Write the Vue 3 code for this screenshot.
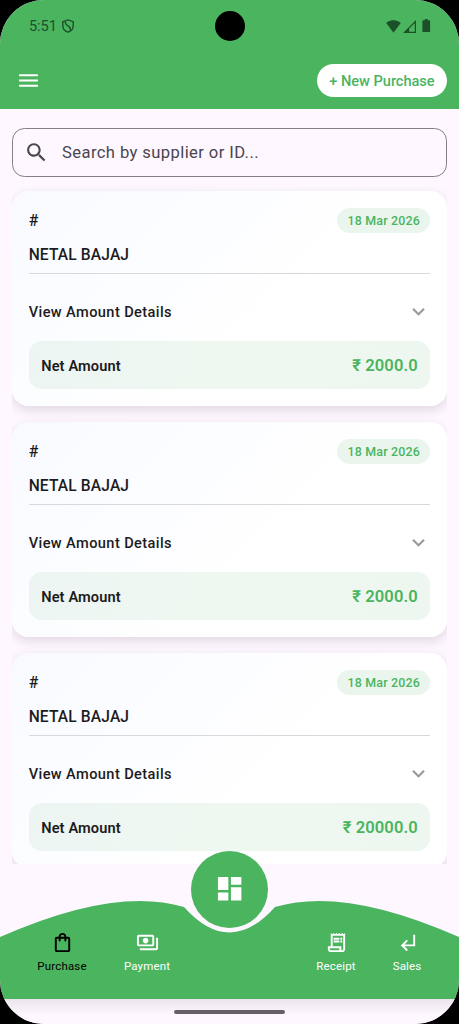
<script setup>
const purchases = [
  { id: 1, supplier: 'NETAL BAJAJ', date: '18 Mar 2026', net: '₹ 2000.0' },
  { id: 2, supplier: 'NETAL BAJAJ', date: '18 Mar 2026', net: '₹ 2000.0' },
  { id: 3, supplier: 'NETAL BAJAJ', date: '18 Mar 2026', net: '₹ 20000.0' },
]
const tabs = [
  { label: 'Purchase', slot: 'purchase', active: true, icon: 'M18 6h-2c0-2.21-1.79-4-4-4S8 3.79 8 6H6c-1.1 0-2 .9-2 2v12c0 1.1.9 2 2 2h12c1.1 0 2-.9 2-2V8c0-1.1-.9-2-2-2zm-6-2c1.1 0 2 .9 2 2h-4c0-1.1.9-2 2-2zm6 16H6V8h2v2c0 .55.45 1 1 1s1-.45 1-1V8h4v2c0 .55.45 1 1 1s1-.45 1-1V8h2v12z' },
  { label: 'Payment', slot: 'payment', icon: 'M19 14V6c0-1.1-.9-2-2-2H3c-1.1 0-2 .9-2 2v8c0 1.1.9 2 2 2h14c1.1 0 2-.9 2-2zm-2 0H3V6h14v8zm-7-7c-1.66 0-3 1.34-3 3s1.34 3 3 3 3-1.34 3-3-1.34-3-3-3zm13 0v11c0 1.1-.9 2-2 2H4v-2h17V7h2z' },
  { label: 'Receipt', slot: 'receipt', icon: 'M19.5 3.5L18 2l-1.5 1.5L15 2l-1.5 1.5L12 2l-1.5 1.5L9 2 7.5 3.5 6 2v14H3v3c0 1.66 1.34 3 3 3h12c1.66 0 3-1.34 3-3V2l-1.5 1.5zM15 20H6c-.55 0-1-.45-1-1v-1h10v2zm4-1c0 .55-.45 1-1 1s-1-.45-1-1v-3H8V5h11v14zM9 7h6v2H9zm7 0h2v2h-2zM9 10h6v2H9zm7 0h2v2h-2z' },
  { label: 'Sales', slot: 'sales', icon: 'M11 9l1.42 1.42L8.83 14H18V4h2v12H8.83l3.59 3.58L11 21l-6-6 6-6z' },
]
</script>

<template>
  <div class="device">
    <div class="screen">
      <header class="top">
        <div class="status">
          <div class="status-left">
            <span class="clock">5:51</span>
            <svg class="shield" viewBox="0 0 12 14" fill="none" stroke="currentColor" stroke-width="1.4">
              <path d="M6 .9 11.2 2.7V6.6C11.2 9.8 9 12.3 6 13.2 3 12.3.8 9.8.8 6.6V2.7Z" />
              <path d="M3.2 2.2C3.2 5 4.2 6 6 6.8 8 7.7 8.6 9 8.4 11.4" />
            </svg>
          </div>
          <div class="status-right">
            <svg class="wifi" viewBox="0 2.7 24 19.2" preserveAspectRatio="none"><path fill="currentColor" d="M12.01 21.49 23.64 7C23.19 6.66 18.71 3 12 3 5.28 3 .81 6.66.36 7l11.63 14.49z" /></svg>
            <svg class="signal" viewBox="0 0 13 13"><path fill="currentColor" fill-rule="evenodd" d="M13 0V13H0ZM11.8 2.9 6.2 8.5V11.8H11.8Z" /></svg>
            <svg class="battery" viewBox="0 0 8 14"><path fill="currentColor" d="M2.5 0h3v1.4H7c.6 0 1 .4 1 1V13c0 .6-.4 1-1 1H1c-.6 0-1-.4-1-1V2.4c0-.6.4-1 1-1h1.5Z" /></svg>
          </div>
          <i class="camera"></i>
        </div>
        <div class="bar">
          <svg class="menu" viewBox="0 0 24 24"><path fill="#fff" d="M3 18h18v-2H3zm0-5h18v-2H3zm0-7v2h18V6z" /></svg>
          <button class="new">+ New Purchase</button>
        </div>
      </header>

      <div class="search">
        <svg viewBox="0 0 24 24"><path fill="#49454f" d="M15.5 14h-.79l-.28-.27C15.41 12.59 16 11.11 16 9.5 16 5.91 13.09 3 9.5 3S3 5.91 3 9.5 5.91 16 9.5 16c1.61 0 3.09-.59 4.23-1.57l.27.28v.79l5 4.99L20.49 19l-4.99-5zm-6 0C7.01 14 5 11.99 5 9.5S7.01 5 9.5 5 14 7.01 14 9.5 11.99 14 9.5 14z" /></svg>
        <span>Search by supplier or ID...</span>
      </div>

      <main class="list">
        <article v-for="p in purchases" :key="p.id" class="card">
          <div class="head"><span class="hash">#</span><span class="pill">{{ p.date }}</span></div>
          <div class="name">{{ p.supplier }}</div>
          <div class="details">
            <span>View Amount Details</span>
            <svg viewBox="0 0 24 24"><path fill="#9a9a9a" d="M16.59 8.59 12 13.17 7.41 8.59 6 10l6 6 6-6z" /></svg>
          </div>
          <div class="net"><span>Net Amount</span><b>{{ p.net }}</b></div>
        </article>
      </main>

      <nav class="nav">
        <svg class="wave" viewBox="0 0 459 135"><path fill="#4bb45f" d="M0 73Q115 22 184 43Q229.500 94 275 43Q344 22 459 73V135H0Z" /></svg>
        <div v-for="t in tabs" :key="t.slot" class="tab" :class="[t.slot, { active: t.active }]">
          <svg viewBox="0 0 24 24"><path fill="currentColor" :d="t.icon" /></svg>
          <span>{{ t.label }}</span>
        </div>
        <div class="fab">
          <svg viewBox="0 0 24 24"><path fill="#fff" d="M3 13h8V3H3v10zm0 8h8v-6H3v6zm10 0h8V11h-8v10zm0-18v6h8V3h-8z" /></svg>
        </div>
      </nav>
      <footer class="gesture"><i></i></footer>
    </div>
  </div>
</template>

<style>
body { margin: 0; background: #000; }
</style>

<style scoped>
.device { width: 459px; height: 1024px; background: #000; font-family: Roboto, "Noto Sans", sans-serif; color: #1d1b20; }
.device, .device * { box-sizing: border-box; }
svg { display: block; flex: none; }
.screen { height: 1024px; overflow: hidden; border-radius: 44px; background: #fef7ff; display: flex; flex-direction: column; }
.top { height: 109px; background: #4bb45f; flex: none; }
.status { position: relative; height: 52px; display: flex; justify-content: space-between; padding: 0 28.5px 0 29px; color: #1c5029; }
.status-left, .status-right { display: flex; align-items: center; }
.clock { font-size: 14.6px; letter-spacing: -.1px; line-height: 52px; }
.shield { width: 12px; height: 14px; margin-left: 5.5px; }
.wifi { width: 15px; height: 13px; }
.signal { width: 13px; height: 13px; margin-left: 1.5px; }
.battery { width: 8.5px; height: 13.5px; margin-left: 6.5px; margin-top: -1px; }
.camera { position: absolute; left: 214.5px; top: 11px; width: 30px; height: 30px; border-radius: 50%; background: #000; }
.bar { height: 57px; display: flex; align-items: center; justify-content: space-between; padding: 0 12px 0 16px; }
.menu { width: 25px; height: 25px; }
.new { width: 130px; height: 33px; border: 0; border-radius: 17px; background: #fff; color: #4bb45f; font: 500 14.6px Roboto, sans-serif; letter-spacing: -.03px; padding: 0; white-space: nowrap; }
.search { margin: 18.5px 12px 0; height: 49.5px; flex: none; border: 1px solid #857f88; border-radius: 12.5px; display: flex; align-items: center; padding-left: 11px; color: #49454f; font-size: 16.6px; letter-spacing: .4px; }
.search svg { width: 25px; height: 25px; margin-right: 13px; }
.list { margin: 0 12px; height: 687px; flex: none; overflow: hidden; padding-top: 14.3px; display: flex; flex-direction: column; gap: 16.5px; }
.card { height: 214.5px; flex: none; border-radius: 16.7px; padding: 16.5px 16.7px; background: linear-gradient(135deg, #f8faff, #fff 60%); box-shadow: 0 4px 11px rgba(50, 25, 50, .14); }
.head { height: 25.5px; display: flex; align-items: center; justify-content: space-between; }
.hash { font-size: 16px; font-weight: 500; }
.pill { width: 93px; height: 25.5px; border-radius: 13px; background: #eaf6ed; color: #4bb45f; font-size: 12.4px; font-weight: 500; letter-spacing: .2px; line-height: 25.5px; text-align: center; }
.name { height: 40.5px; border-bottom: 1px solid #d9d8dd; font-size: 15.6px; font-weight: 500; letter-spacing: .12px; line-height: 44.4px; }
.details { height: 67.5px; padding-top: 8px; display: flex; align-items: center; justify-content: space-between; font-size: 14.6px; font-weight: 500; letter-spacing: .4px; }
.details svg { width: 25px; height: 25px; margin-right: -.5px; }
.net { height: 48px; border-radius: 12.5px; background: linear-gradient(100deg, #edf5f3, #eef8f0 50%, #edf7f0); display: flex; align-items: center; justify-content: space-between; padding: .6px 12.5px 0; font-size: 14.6px; font-weight: 600; letter-spacing: .12px; }
.net b { font-size: 16.6px; font-weight: 600; color: #4bb45f; letter-spacing: .08px; }
.nav { position: relative; height: 135px; flex: none; color: #fff; }
.wave { width: 459px; height: 135px; }
.tab { position: absolute; top: 66.5px; width: 70px; display: flex; flex-direction: column; align-items: center; font-size: 11.5px; letter-spacing: .16px; line-height: 16px; }
.tab svg { width: 23px; height: 23px; margin-bottom: 4px; }
.purchase { left: 27px; }
.payment { left: 112px; }
.receipt { left: 301px; }
.sales { left: 372px; }
.active { color: #000; }
.fab { position: absolute; left: 191px; top: -13.5px; width: 77px; height: 77px; border-radius: 50%; background: #4bb45f; display: flex; align-items: center; justify-content: center; }
.fab svg { width: 31.3px; height: 31.3px; }
.gesture { flex: 1; background: linear-gradient(#ece4ed, #fef7ff 65%); display: flex; justify-content: center; }
.gesture i { width: 111px; height: 4.5px; margin-top: 10.5px; border-radius: 3px; background: #665f68; }
</style>
